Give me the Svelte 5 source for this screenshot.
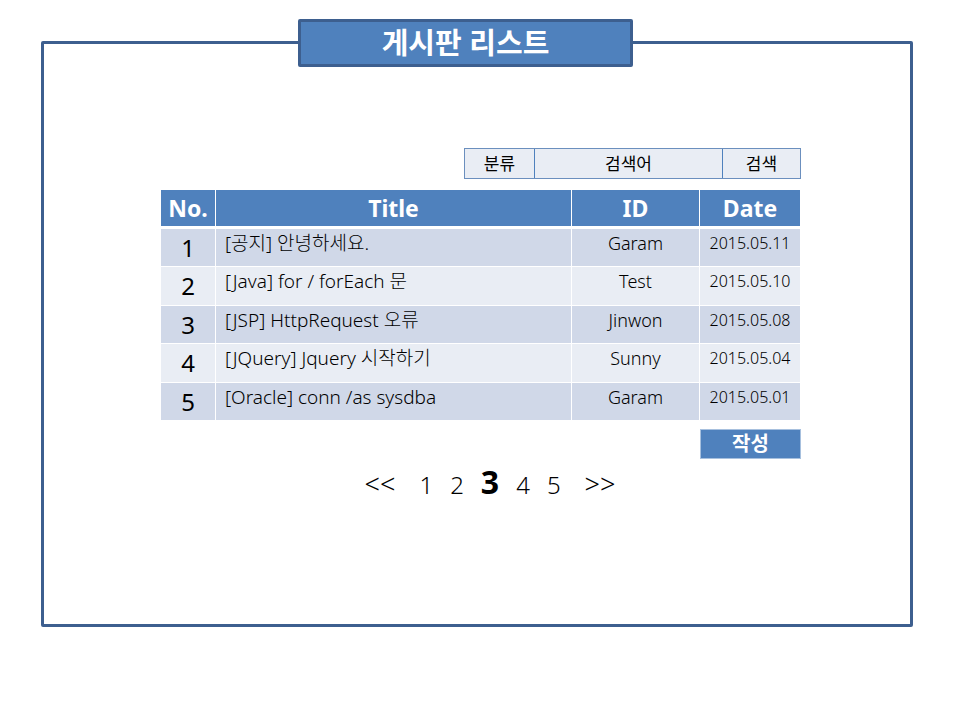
<script>
  const posts = [
    { no: 1, title: '[공지] 안녕하세요.', id: 'Garam', date: '2015.05.11' },
    { no: 2, title: '[Java] for / forEach 문', id: 'Test', date: '2015.05.10' },
    { no: 3, title: '[JSP] HttpRequest 오류', id: 'Jinwon', date: '2015.05.08' },
    { no: 4, title: '[JQuery] Jquery 시작하기', id: 'Sunny', date: '2015.05.04' },
    { no: 5, title: '[Oracle] conn /as sysdba', id: 'Garam', date: '2015.05.01' }
  ];
  const pages = [1, 2, 3, 4, 5];
  let current = $state(3);
  let keyword = $state('검색어');
</script>

<main class="frame">
  <header><h1>게시판 리스트</h1></header>

  <div class="board">
    <form class="search" onsubmit={(e) => e.preventDefault()}>
      <select aria-label="분류">
        <option>분류</option>
      </select>
      <input type="text" aria-label="검색어" bind:value={keyword} />
      <button type="submit">검색</button>
    </form>

    <table>
      <colgroup>
        <col class="c-no" />
        <col />
        <col class="c-id" />
        <col class="c-date" />
      </colgroup>
      <thead>
        <tr><th>No.</th><th>Title</th><th>ID</th><th>Date</th></tr>
      </thead>
      <tbody>
        {#each posts as post (post.no)}
          <tr>
            <td class="no">{post.no}</td>
            <td class="title">{post.title}</td>
            <td class="id">{post.id}</td>
            <td class="date">{post.date}</td>
          </tr>
        {/each}
      </tbody>
    </table>

    <button class="write" type="button">작성</button>

    <nav aria-label="페이지">
      <button type="button" class="step" onclick={() => (current = Math.max(1, current - 1))}>&lt;&lt;</button>
      <div class="pages">
        {#each pages as page}
          <button type="button" class:current={page === current} onclick={() => (current = page)}>{page}</button>
        {/each}
      </div>
      <button type="button" class="step" onclick={() => (current = Math.min(5, current + 1))}>&gt;&gt;</button>
    </nav>
  </div>
</main>

<style>
  :global(body) {
    background: #fff;
  }
  .frame,
  .frame * {
    box-sizing: border-box;
  }
  .frame {
    margin: 41px 47px 41px 41px;
    padding: 0 0 119px 8px;
    border: 3px solid #3d5f8f;
    border-radius: 2px;
    font-family: 'Noto Sans', 'Noto Sans CJK KR', sans-serif;
    color: #000;
  }
  button,
  input,
  select {
    font: inherit;
    color: inherit;
    margin: 0;
    padding: 0;
    border: 0;
    border-radius: 0;
    background: none;
  }
  button {
    cursor: pointer;
  }
  header {
    display: flex;
    justify-content: center;
    margin-top: -25px;
    padding-right: 31px;
  }
  h1 {
    width: 335px;
    max-width: 80%;
    margin: 0;
    border: 3px solid #3d5f8f;
    border-radius: 2px;
    background: #4f81bd;
    color: #fff;
    font-size: 29px;
    line-height: 42px;
    font-weight: 700;
    text-align: center;
  }
  .board {
    display: flex;
    flex-direction: column;
    max-width: 640px;
    margin: 0 auto;
    padding-top: 81px;
  }
  .search {
    display: grid;
    grid-template-columns: 69px 188px 78px;
    align-self: flex-end;
    height: 31px;
    margin-bottom: 11px;
    border: 1px solid #6b8fbe;
    background: #e9edf4;
    font-size: 17px;
    line-height: 28px;
    font-weight: 400;
  }
  .search > * {
    min-width: 0;
    text-align: center;
    text-align-last: center;
  }
  .search select {
    appearance: none;
  }
  .search > * + * {
    border-left: 1px solid #4f81bd;
  }
  table {
    width: 100%;
    table-layout: fixed;
    border-collapse: separate;
    border-spacing: 0;
  }
  .c-no {
    width: 55px;
  }
  .c-id {
    width: 128px;
  }
  .c-date {
    width: 101px;
  }
  th,
  td {
    padding: 0;
    border-right: 1px solid #fff;
    text-align: center;
  }
  th {
    height: 39px;
    border-bottom: 3px solid #fff;
    background: #4f81bd;
    color: #fff;
    font-size: 23px;
    line-height: 34px;
    font-weight: 700;
  }
  td {
    height: 38px;
    padding-top: 2px;
    border-bottom: 1px solid #fff;
    background: #e9edf4;
    font-size: 18px;
    line-height: 24px;
    vertical-align: top;
  }
  tbody tr:nth-child(even) td {
    height: 39px;
  }
  tbody tr:nth-child(odd) td {
    background: #d0d8e8;
  }
  td.no {
    font-size: 24px;
    line-height: 34px;
  }
  td.title {
    padding-left: 9px;
    font-size: 19px;
    text-align: left;
    white-space: nowrap;
    font-weight: 300;
  }
  td.id {
    font-weight: 300;
  }
  td.date {
    font-size: 16px;
    font-weight: 300;
  }
  .write {
    align-self: flex-end;
    width: 101px;
    height: 30px;
    margin-top: 8px;
    border: 1px solid #a7c0de;
    background: #4f81bd;
    color: #fff;
    font-size: 20px;
    line-height: 28px;
    font-weight: 700;
  }
  nav {
    display: flex;
    justify-content: center;
    align-items: baseline;
    gap: 24px;
    margin-top: 3px;
    padding-left: 18px;
    font-size: 24px;
    line-height: 40px;
  }
  .step {
    font-size: 27px;
    font-weight: 300;
  }
  .pages {
    display: flex;
    align-items: baseline;
    gap: 17px;
    font-weight: 300;
  }
  .current {
    font-size: 32px;
    font-weight: 700;
  }
</style>
